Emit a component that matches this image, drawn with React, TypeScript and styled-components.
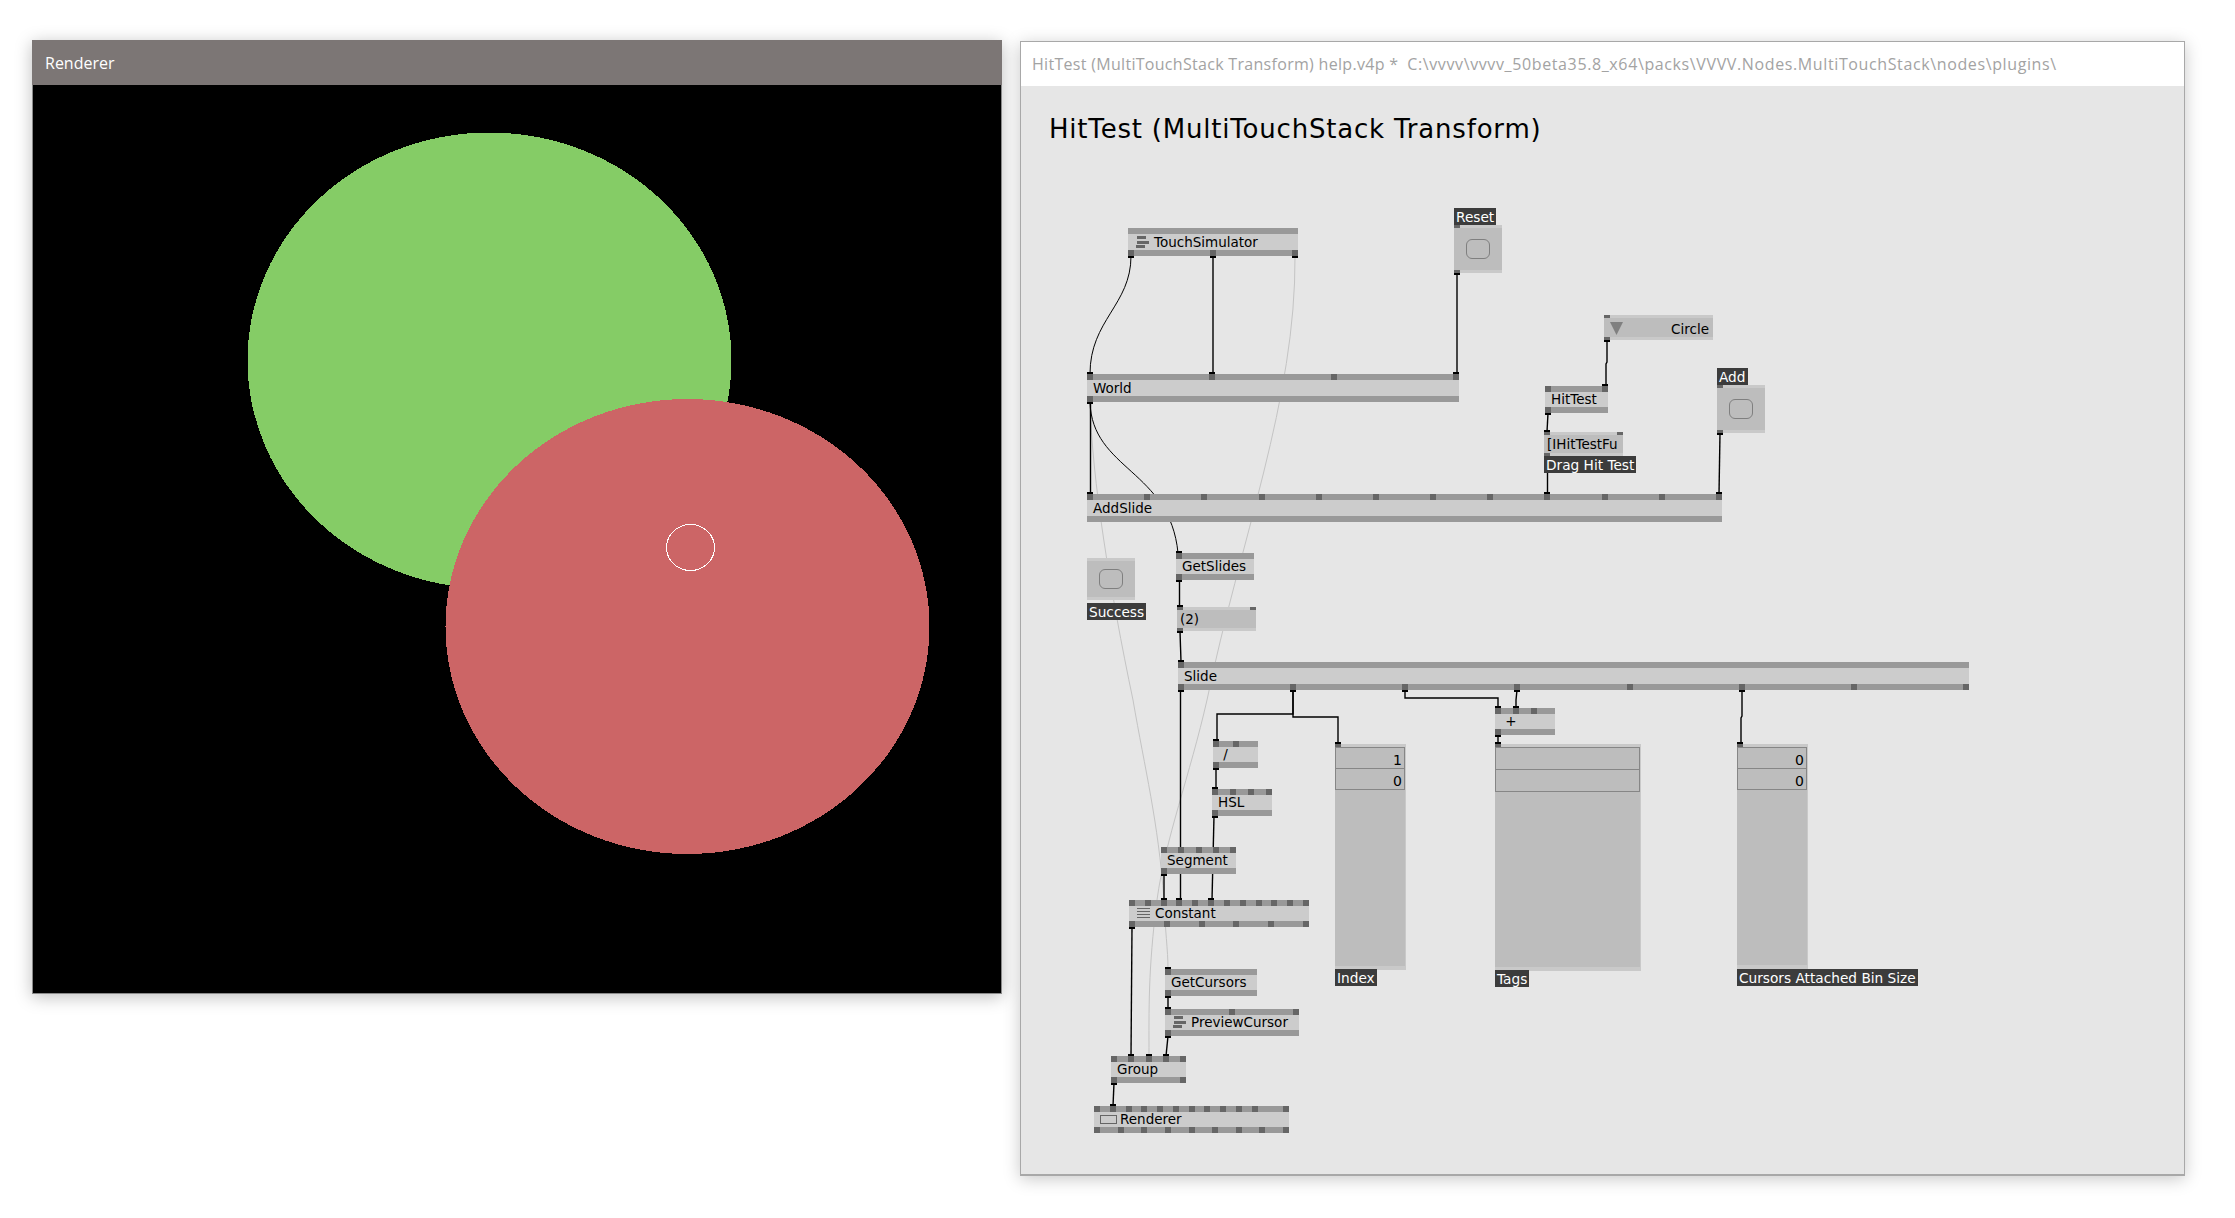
import { createGlobalStyle, styled } from "styled-components";

const PATCH_X = 1021;
const PATCH_Y = 86;

const GlobalStyle = createGlobalStyle`
  html, body {
    margin: 0;
    background: #fff;
    overflow: hidden;
  }
`;

const Page = styled.div`
  display: flex;
  align-items: flex-start;
  gap: 18px;
  padding: 40px 0 0 32px;
  width: 2235px;
  height: 1218px;
  box-sizing: border-box;
`;

const RendererWindow = styled.section`
  width: 970px;
  box-sizing: border-box;
  border: 1px solid #8a8a8a;
  border-top: 0;
  box-shadow: 0 3px 16px rgba(0, 0, 0, 0.26);
`;

const RendererBar = styled.header`
  height: 45px;
  box-sizing: border-box;
  margin: 0 -1px;
  padding: 10px 13px 0;
  background: #7c7675;
  color: #fff;
  font: 16px/26px "Open Sans", sans-serif;
`;

const Scene = styled.svg`
  display: block;
  width: 968px;
  height: 908px;
  background: #000;
`;

const HelpWindow = styled.section`
  width: 1165px;
  box-sizing: border-box;
  border: 1px solid #a8a8a8;
  border-bottom-width: 2px;
  margin-top: 1px;
  box-shadow: 0 3px 16px rgba(0, 0, 0, 0.22);
`;

const HelpBar = styled.header`
  height: 44px;
  box-sizing: border-box;
  padding: 9px 11px 0;
  background: #fff;
  color: #a3a3a3;
  font: 16px/26px "Open Sans", sans-serif;
  white-space: pre;
`;

const HelpName = styled.span`
  letter-spacing: 0.3px;
`;

const HelpPath = styled.span`
  letter-spacing: 0.62px;
`;

const Patch = styled.div`
  position: relative;
  height: 1088px;
  background: #e6e6e6;
  font: 13.5px/16px "DejaVu Sans", sans-serif;
  color: #000;
`;

const PatchTitle = styled.h1`
  margin: 0;
  position: absolute;
  left: 28px;
  top: 25px;
  font: 400 26px/36px "DejaVu Sans", sans-serif;
  letter-spacing: 0.8px;
  white-space: pre;
`;

const Wires = styled.svg`
  position: absolute;
  left: 0;
  top: 0;
`;

// anything placed on the patch canvas, given in page coordinates
const Placed = styled.div<{ $x: number; $y: number; $w: number; $h: number }>`
  position: absolute;
  left: ${(p) => p.$x - PATCH_X}px;
  top: ${(p) => p.$y - PATCH_Y}px;
  width: ${(p) => p.$w}px;
  height: ${(p) => p.$h}px;
  box-sizing: border-box;
`;

const NodeBox = styled(Placed)`
  display: flex;
  flex-direction: column;
  background: #cccccc;
`;

const PinRow = styled.div<{ $bar: string; $height: number }>`
  display: flex;
  justify-content: space-between;
  height: ${(p) => p.$height}px;
  flex: none;
  background: ${(p) => p.$bar};
`;

const PinMark = styled.i<{ $kind: string; $height: number; $side: "top" | "bottom" }>`
  position: relative;
  display: block;
  width: 6px;
  height: ${(p) => p.$height}px;
  background: ${(p) => (p.$kind === "-" ? "transparent" : "#666")};

  ${(p) =>
    p.$kind === "o"
      ? `&::after {
          content: "";
          position: absolute;
          left: 0;
          width: 6px;
          height: 2px;
          background: #000;
          ${p.$side === "top" ? "top: -2px;" : "bottom: -2px;"}
        }`
      : ""}
`;

const NodeBody = styled.div`
  flex: 1 1 0;
  min-height: 0;
  display: flex;
  align-items: center;
  gap: 5px;
  padding: 0 0 1px 6px;
  white-space: pre;
`;

const IconSlot = styled.svg`
  flex: none;
  margin-left: 2px;
`;

const ScreenSlot = styled.svg`
  flex: none;
  margin-right: -2px;
`;

const IoBox = styled(Placed)`
  display: flex;
  flex-direction: column;
  background: #c9c9c9;
`;

const IoFace = styled.div<{ $align?: string }>`
  flex: 1 1 0;
  min-height: 0;
  display: flex;
  align-items: center;
  justify-content: ${(p) => p.$align ?? "center"};
  background: #bdbdbd;
  padding: ${(p) =>
    p.$align === "space-between" ? "2px 4px 0 6px" : p.$align ? "0 4px 0 3px" : "0"};
`;

const Bang = styled.div`
  width: 24px;
  height: 20px;
  box-sizing: border-box;
  border: 1px solid #7f7f7f;
  border-radius: 6px;
`;

const Spread = styled(Placed)`
  display: flex;
  flex-direction: column;
  background: #c9c9c9;
`;

const SpreadFace = styled.div`
  flex: 1;
  background: #bdbdbd;
  margin-right: 1px;
`;

const Cell = styled.div<{ $h: number }>`
  display: flex;
  align-items: center;
  justify-content: flex-end;
  height: ${(p) => p.$h}px;
  box-sizing: border-box;
  border: 1px solid #868686;
  margin-top: -1px;
  padding: 4px 2px 0 0;
  font-size: 14px;

  &:first-child {
    margin-top: 0;
  }
`;

const Tag = styled.div<{ $x: number; $y: number }>`
  position: absolute;
  left: ${(p) => p.$x - PATCH_X}px;
  top: ${(p) => p.$y - PATCH_Y}px;
  height: 17px;
  padding: 0 2px;
  background: #3c3c3c;
  color: #fff;
  font-size: 13.7px;
  line-height: 18px;
  white-space: pre;
`;

type NodeProps = {
  x: number;
  y: number;
  w: number;
  h?: number;
  label?: string;
  top?: string;
  bottom?: string;
  icon?: React.ReactNode;
};

// pin strings: x = pin, o = pin with a link cap, - = empty slot
function Pins({ pattern, side, height = 6, bar = "#999" }: { pattern: string; side: "top" | "bottom"; height?: number; bar?: string }) {
  return (
    <PinRow $bar={bar} $height={height}>
      {pattern.split("").map((kind, i) => (
        <PinMark key={i} $kind={kind} $height={height} $side={side} />
      ))}
    </PinRow>
  );
}

function Node({ x, y, w, h = 27, label, top = "", bottom = "", icon }: NodeProps) {
  return (
    <NodeBox $x={x} $y={y} $w={w} $h={h}>
      <Pins pattern={top} side="top" />
      <NodeBody>
        {icon}
        {label}
      </NodeBody>
      <Pins pattern={bottom} side="bottom" />
    </NodeBox>
  );
}

function IoNode({ x, y, w, h, top, bottom, children, align }: { x: number; y: number; w: number; h: number; top: string; bottom: string; children?: React.ReactNode; align?: string }) {
  return (
    <IoBox $x={x} $y={y} $w={w} $h={h}>
      <Pins pattern={top} side="top" height={3} bar="#c9c9c9" />
      <IoFace $align={align}>{children}</IoFace>
      <Pins pattern={bottom} side="bottom" height={3} bar="#c9c9c9" />
    </IoBox>
  );
}

function SpreadBox({ x, y, w, h, values, cell }: { x: number; y: number; w: number; h: number; values: string[]; cell: number }) {
  return (
    <Spread $x={x} $y={y} $w={w} $h={h}>
      <Pins pattern="o" side="top" height={3} bar="#c9c9c9" />
      <SpreadFace>
        {values.map((v, i) => (
          <Cell key={i} $h={cell}>
            {v}
          </Cell>
        ))}
      </SpreadFace>
      <Pins pattern="" side="bottom" height={4} bar="#c9c9c9" />
    </Spread>
  );
}

const BarsIcon = (
  <IconSlot width="13" height="12" viewBox="0 0 13 12">
    <rect x="1" y="0" width="9" height="3" fill="#666" />
    <rect x="1" y="5" width="12" height="3" fill="#666" />
    <rect x="0" y="9" width="9" height="3" fill="#666" />
  </IconSlot>
);

const LinesIcon = (
  <IconSlot width="13" height="10" viewBox="0 0 13 10" shapeRendering="crispEdges">
    <path d="M0 .5h13M0 3.5h13M0 6.5h13M0 9.5h13" stroke="#666" fill="none" />
  </IconSlot>
);

const ScreenIcon = (
  <ScreenSlot width="17" height="9" viewBox="0 0 17 9" shapeRendering="crispEdges">
    <rect x=".5" y=".5" width="16" height="8" stroke="#666" fill="none" />
  </ScreenSlot>
);

const curvedWires = [
  "M1131 256C1131 305 1090 320 1090 374",
  "M1090 402C1092 470 1170 470 1178 553",
];

const blackWires = [
  "M1213 256V374",
  "M1457 273V374",
  "M1090.5 402V494",
  "M1607 340V362L1606 364V386",
  "M1548 413L1547 432",
  "M1547.5 456V494",
  "M1720 433L1719 494",
  "M1179.5 580V607",
  "M1180 631L1181 662",
  "M1180.5 690V900",
  "M1293 690V714H1217V741",
  "M1293 690V717H1338V744",
  "M1405 690V698H1498V708",
  "M1517 690L1516 700V708",
  "M1498 735V744",
  "M1742 690V716L1741 718V744",
  "M1216 768V789",
  "M1214 816L1212 900",
  "M1164 874V900",
  "M1132 927L1131 1056",
  "M1168 996V1009",
  "M1168 1036L1166 1056",
  "M1114 1083L1113 1106",
];

const greyWires = [
  "M1295 256C1296 400 1240 540 1207 700C1190 775 1165 840 1157 900C1148 970 1149 1010 1149 1056",
  "M1090 402C1092 480 1110 590 1133 700C1145 770 1158 820 1164 900C1165 930 1168 950 1168 969",
];

function App() {
  return (
    <>
      <GlobalStyle />
      <Page>
        <RendererWindow>
          <RendererBar>Renderer</RendererBar>
          <Scene viewBox="33 85 968 908" shapeRendering="crispEdges">
            <ellipse cx="489.5" cy="360.5" rx="242" ry="228" fill="#85cc66" />
            <ellipse cx="687.5" cy="626.5" rx="242" ry="227.5" fill="#cc6566" />
            <ellipse cx="690.5" cy="547.5" rx="24" ry="23" fill="none" stroke="#fff" />
          </Scene>
        </RendererWindow>

        <HelpWindow>
          <HelpBar>
            <HelpName>HitTest (MultiTouchStack Transform) help.v4p *  </HelpName>
            <HelpPath>{"C:\\vvvv\\vvvv_50beta35.8_x64\\packs\\VVVV.Nodes.MultiTouchStack\\nodes\\plugins\\"}</HelpPath>
          </HelpBar>
          <Patch>
            <PatchTitle>HitTest (MultiTouchStack Transform)</PatchTitle>

            <Wires width="1163" height="1088" viewBox={`${PATCH_X} ${PATCH_Y} 1163 1088`} fill="none">
              {greyWires.map((d) => (
                <path key={d} d={d} stroke="#c4c4c4" strokeWidth="1" />
              ))}
              {curvedWires.map((d) => (
                <path key={d} d={d} stroke="#000" strokeWidth="1" />
              ))}
              {blackWires.map((d) => (
                <path key={d} d={d} stroke="#000" strokeWidth="1.4" />
              ))}
            </Wires>

            <Node x={1128} y={228} w={170} h={28} label="TouchSimulator" bottom="ooo" icon={BarsIcon} />
            <Node x={1087} y={374} w={372} h={28} label="World" top="ooxo" bottom="o" />
            <Node x={1087} y={494} w={635} h={28} label="AddSlide" top="oxxxxxxxoxxo" />
            <Node x={1176} y={553} w={78} label="GetSlides" top="o" bottom="o" />
            <Node x={1178} y={662} w={791} h={28} label="Slide" top="o" bottom="ooooxoxx" />
            <Node x={1545} y={386} w={63} label="HitTest" top="xo" bottom="o" />
            <Node x={1213} y={741} w={45} label=" /" top="ox-" bottom="o" />
            <Node x={1212} y={789} w={60} label="HSL" top="oxxx" bottom="o" />
            <Node x={1495} y={708} w={60} label=" +" top="oox-" bottom="o" />
            <Node x={1161} y={847} w={75} label="Segment" top="xxxxx" bottom="o" />
            <Node x={1129} y={900} w={180} label="Constant" top="xxooxoxxxxxx" bottom="oxxxxx" icon={LinesIcon} />
            <Node x={1165} y={969} w={92} label="GetCursors" top="o" bottom="o" />
            <Node x={1165} y={1009} w={134} label="PreviewCursor" top="oxx" bottom="o" icon={BarsIcon} />
            <Node x={1111} y={1056} w={75} label="Group" top="xooox" bottom="ox" />
            <Node x={1094} y={1106} w={195} label="Renderer" top="xoxxxxxxxxx-x" bottom="xxxxxxxxx" icon={ScreenIcon} />

            <IoNode x={1454} y={225} w={48} h={48} top="x" bottom="o">
              <Bang />
            </IoNode>
            <IoNode x={1717} y={385} w={48} h={48} top="x" bottom="o">
              <Bang />
            </IoNode>
            <IoNode x={1087} y={558} w={48} h={42} top="" bottom="">
              <Bang />
            </IoNode>
            <IoNode x={1604} y={315} w={109} h={25} top="x" bottom="o" align="space-between">
              <svg width="13" height="13" viewBox="0 0 13 13">
                <path d="M0 0H13L6.5 13Z" fill="#808080" />
              </svg>
              Circle
            </IoNode>
            <IoNode x={1544} y={432} w={79} h={24} top="ox" bottom="x" align="flex-start">
              [IHitTestFu
            </IoNode>
            <IoNode x={1177} y={607} w={79} h={24} top="ox" bottom="o" align="flex-start">
              (2)
            </IoNode>

            <SpreadBox x={1335} y={744} w={71} h={226} values={["1", "0"]} cell={22} />
            <SpreadBox x={1495} y={744} w={146} h={227} values={["", ""]} cell={23} />
            <SpreadBox x={1737} y={744} w={71} h={225} values={["0", "0"]} cell={22} />

            <Tag $x={1454} $y={208}>Reset</Tag>
            <Tag $x={1717} $y={368}>Add</Tag>
            <Tag $x={1544} $y={456}>Drag Hit Test</Tag>
            <Tag $x={1087} $y={603}>Success</Tag>
            <Tag $x={1335} $y={969}>Index</Tag>
            <Tag $x={1495} $y={970}>Tags</Tag>
            <Tag $x={1737} $y={969}>Cursors Attached Bin Size</Tag>
          </Patch>
        </HelpWindow>
      </Page>
    </>
  );
}

export default App;
